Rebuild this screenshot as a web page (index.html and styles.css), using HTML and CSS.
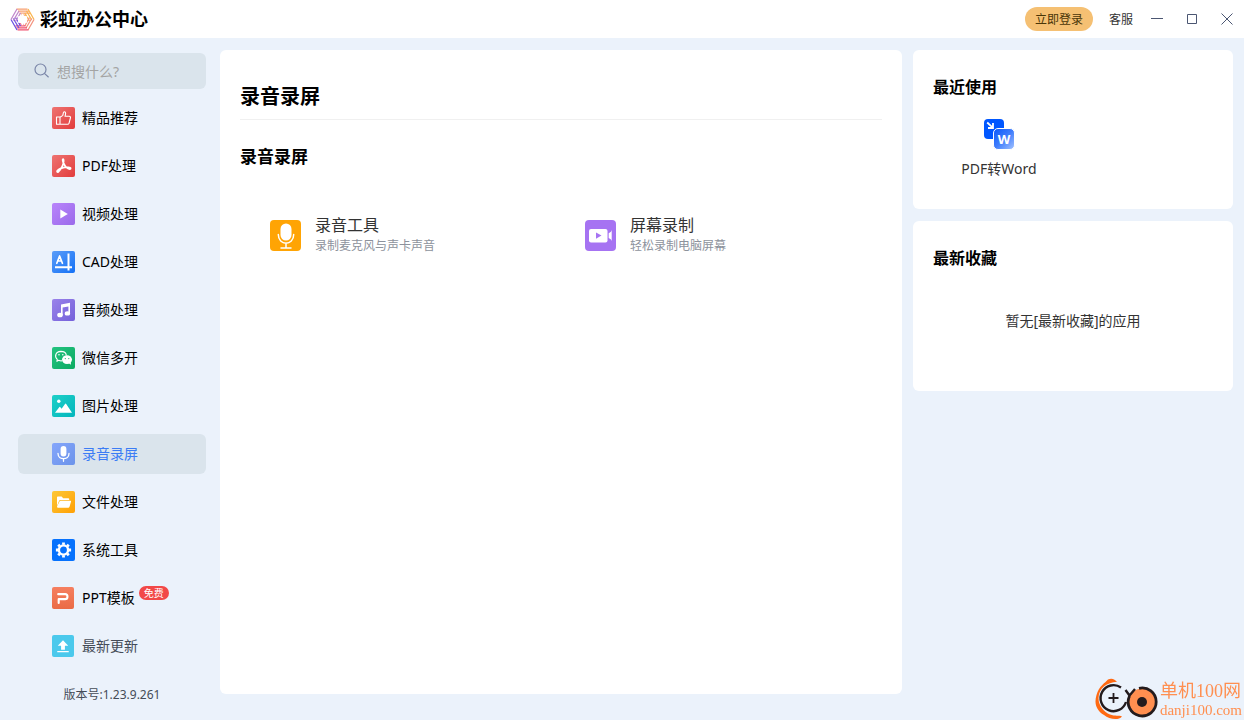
FILE: index.html
```
<!DOCTYPE html>
<html lang="zh-CN">
<head>
<meta charset="utf-8">
<meta name="viewport" content="width=device-width, initial-scale=1">
<title>彩虹办公中心</title>
<link rel="stylesheet" href="styles.css">
</head>
<body>
<header class="titlebar">
  <div class="brand">
    <svg class="brand-logo" viewBox="0 0 25 23" aria-hidden="true">
      <g fill="none" stroke-width="1.3">
        <path stroke="#f7a070" d="M6.5 1.200H17.500M8 3.200H19M9.500 5.200H20M11 7.200H16"/>
        <path stroke="#fbb650" d="M18 1L24 11.500M16.500 3L21.700 12M14.800 5L19.500 13"/>
        <path stroke="#f49480" d="M24 11.500L18 22M21.700 10.500L16 20M19.500 9.500L14.800 18"/>
        <path stroke="#f0506f" d="M7.500 21.800H18.500M6.500 19.800H17M5.500 17.800H15.500M9 15.800H14"/>
        <path stroke="#6c52e2" d="M1 11.500L7 22M3.300 10.500L9 20M5.500 9.500L10.500 18"/>
        <path stroke="#c288cc" d="M1 11.500L7 1M3.300 12.500L9 3M5.500 13.500L10.500 5"/>
      </g>
      <path fill="#fff" d="M12.500 5.500L14.400 8.300H17.800L16.100 11.500L17.800 14.700H14.400L12.500 17.500L10.600 14.700H7.200L8.900 11.500L7.200 8.300H10.600Z"/>
    </svg>
    <h1 class="brand-name">彩虹办公中心</h1>
  </div>
  <div class="actions">
    <button class="login" type="button">立即登录</button>
    <button class="service" type="button">客服</button>
    <button class="win" type="button" aria-label="最小化"><svg viewBox="0 0 12 12"><path d="M0 5.5H12"/></svg></button>
    <button class="win" type="button" aria-label="最大化"><svg viewBox="0 0 12 12"><path d="M1.5 1.5H10.5V10.5H1.5Z"/></svg></button>
    <button class="win" type="button" aria-label="关闭"><svg viewBox="0 0 12 12"><path d="M.5 .5L11.5 11.5M11.5 .5L.5 11.5"/></svg></button>
  </div>
</header>

<div class="layout">
  <aside class="sidebar">
    <label class="search">
      <svg class="search-icon" viewBox="0 0 16 16" aria-hidden="true"><circle cx="6.5" cy="6.5" r="5.5"/><path d="M10.4 10.4L14.600 14.2"/></svg>
      <input class="search-input" type="text" placeholder="想搜什么?" aria-label="搜索">
    </label>
    <nav class="nav">
      <a class="nav-item" href="#"><svg class="nav-icon bg-red" viewBox="0 0 23 22"><path class="line thumb" d="M4.5 10H8V17.3H4.5ZM8 10.2L10.6 8.6C11.3 7.5 11 5.5 11.9 4.9C13.3 4.4 14 6 13.4 7.8L13 9.3H17.2C18.3 9.3 18.7 10.2 18.4 11L17 16.3C16.8 17 16.3 17.3 15.6 17.3H8"/></svg>精品推荐</a>
      <a class="nav-item" href="#"><svg class="nav-icon bg-red" viewBox="0 0 23 22"><path class="line pdf" d="M10.9 4.2C9.8 4.8 11.6 8.6 13 10.7C14.5 13 17.8 14.9 18.6 13.7C19.2 12.4 14.5 11.8 11.3 12.6C8 13.4 4.4 15.6 5.2 16.9C6.4 18.1 9.6 13 10.7 10.3C11.6 8 12.2 4 10.9 4.2Z"/></svg>PDF处理</a>
      <a class="nav-item" href="#"><svg class="nav-icon bg-violet" viewBox="0 0 23 22"><path class="solid" d="M8.3 6.6V15.4L15.8 11Z"/></svg>视频处理</a>
      <a class="nav-item" href="#"><svg class="nav-icon bg-blue" viewBox="0 0 23 22"><path class="line cad-letter" d="M4.8 12.3L7.6 5L10.400 12.3M5.8 10H9.4"/><path class="line cad-rule" d="M16.5 2.500V19.500M3 16.3H20"/></svg>CAD处理</a>
      <a class="nav-item" href="#"><svg class="nav-icon bg-indigo" viewBox="0 0 23 22"><path class="solid" d="M9 5.4L18 3.8V14.7H16.4V7.4L10.6 8.4V16.3H9Z"/><ellipse class="solid" cx="8" cy="16" rx="2.8" ry="2.3"/><ellipse class="solid" cx="15.4" cy="14.4" rx="2.7" ry="2.2"/></svg>音频处理</a>
      <a class="nav-item" href="#"><svg class="nav-icon bg-green" viewBox="0 0 23 22"><path class="line thumb" d="M10 13.8C8.5 14 7.4 13.6 6.8 13.3L4.9 14.3L5.3 12.4C2.2 9.9 3.4 4.6 8.8 4.4C12 4.4 14 6.2 14.3 8"/><circle class="solid" cx="7" cy="7.8" r=".8"/><circle class="solid" cx="10.8" cy="7.8" r=".8"/><ellipse class="solid" cx="15" cy="12.6" rx="5" ry="4.3"/><path class="solid" d="M16.5 16L19 17.8L18.7 15Z"/><circle cx="13.3" cy="11.6" r=".6" fill="#14b36e"/><circle cx="16.8" cy="11.6" r=".6" fill="#14b36e"/></svg>微信多开</a>
      <a class="nav-item" href="#"><svg class="nav-icon bg-teal" viewBox="0 0 23 22"><circle class="solid" cx="6.8" cy="6.3" r="1.7"/><path class="solid" d="M3 17.8L7.2 12.2Q7.8 11.5 8.4 12.2L9.6 13.8L13 9Q13.6 8.2 14.2 9L20 17.8Z"/></svg>图片处理</a>
      <a class="nav-item active" href="#" aria-current="page"><svg class="nav-icon bg-peri" viewBox="0 0 23 22"><rect class="solid" x="8.6" y="3" width="5.8" height="10.5" rx="2.9"/><path class="line" d="M6 10.5C6 17.4 17 17.4 17 10.5M11.5 15.7V18.3"/></svg>录音录屏</a>
      <a class="nav-item" href="#"><svg class="nav-icon bg-amber" viewBox="0 0 23 22"><path class="solid" d="M5 15V6.2Q5 5.4 5.8 5.4H9.6L11.2 7.2H16.3Q17.2 7.2 17.2 8V9H8.3Q7.3 9 7 10Z"/><path class="solid" d="M8.600 9.7H18.4Q19.4 9.7 19 10.7L17.5 15.8Q17.2 16.8 16.2 16.8H6Q5 16.8 5 15.5L7.5 10.5Q7.8 9.7 8.6 9.7Z"/></svg>文件处理</a>
      <a class="nav-item" href="#"><svg class="nav-icon bg-royal" viewBox="0 0 23 22"><circle cx="11.5" cy="11" r="4.6" fill="none" stroke="#fff" stroke-width="2.4"/><path class="line gear" d="M11.5 5.8V3.4M11.5 16.2V18.6M6.3 11H3.9M16.7 11H19.1M7.8 7.3L6.2 5.7M15.2 14.7L16.8 16.3M7.8 14.7L6.2 16.3M15.2 7.3L16.8 5.7"/></svg>系统工具</a>
      <a class="nav-item" href="#"><svg class="nav-icon bg-coral" viewBox="0 0 23 22"><path class="line ppt" d="M6.500 7H13.700C17 7 17 12.200 13.700 12.200H7V16.300"/></svg>PPT模板<span class="badge">免费</span></a>
      <a class="nav-item muted" href="#"><svg class="nav-icon bg-sky" viewBox="0 0 23 22"><path class="solid" d="M11.5 5L17 10.7H13.5V15H9.5V10.7H6ZM5.5 16.2H17.5V17.6H5.5Z"/></svg>最新更新</a>
    </nav>
    <p class="version">版本号:1.23.9.261</p>
  </aside>

  <main class="panel content">
    <h2 class="page-title">录音录屏</h2>
    <h3 class="section-title">录音录屏</h3>
    <div class="tools">
      <a class="tool" href="#">
        <svg class="tool-icon" viewBox="0 0 31 31" aria-hidden="true"><rect width="31" height="31" rx="4" fill="#ffa404"/><rect x="10.500" y="3.5" width="11" height="17" rx="5.5" fill="#fff"/><path d="M8.3 14.5C8.3 26 23.7 26 23.7 14.5M16 23V27.5M11 28H21" fill="none" stroke="#fff" stroke-width="1.5" stroke-linecap="round"/></svg>
        <span class="tool-text"><span class="tool-name">录音工具</span><span class="tool-desc">录制麦克风与声卡声音</span></span>
      </a>
      <a class="tool" href="#">
        <svg class="tool-icon" viewBox="0 0 31 31" aria-hidden="true"><rect width="31" height="31" rx="4" fill="#a673f2"/><rect x="4" y="9" width="18.5" height="13.5" rx="2" fill="#fff"/><path d="M11 12.5V18.7L16.5 15.6Z" fill="#a673f2"/><path d="M23.7 13.2Q26.7 12 26.7 10V21Q26.7 19.5 23.7 18Z" fill="#fff"/></svg>
        <span class="tool-text"><span class="tool-name">屏幕录制</span><span class="tool-desc">轻松录制电脑屏幕</span></span>
      </a>
    </div>
  </main>

  <aside class="side">
    <section class="panel card recent">
      <h3 class="card-title">最近使用</h3>
      <a class="recent-item" href="#">
        <svg class="recent-icon" viewBox="0 0 30 30" aria-hidden="true">
          <defs><linearGradient id="word" x1="0" y1="0" x2="1" y2="1"><stop offset="0" stop-color="#0a58fb"/><stop offset=".5" stop-color="#3f7dfc"/><stop offset="1" stop-color="#a5c4ff"/></linearGradient></defs>
          <rect width="20" height="20" rx="4" fill="#0057ff"/>
          <path d="M3.2 3.5L8.5 8.3M4 9H9V4" fill="none" stroke="#fff" stroke-width="1.8"/>
          <rect x="9.5" y="9.5" width="21" height="21" rx="4.5" fill="url(#word)" stroke="#fff"/>
          <text class="word-mark" x="20" y="24.5" text-anchor="middle">W</text>
        </svg>
        PDF转Word
      </a>
    </section>
    <section class="panel card favorites">
      <h3 class="card-title">最新收藏</h3>
      <p class="empty">暂无[最新收藏]的应用</p>
    </section>
  </aside>
</div>

<div class="watermark">
  <svg class="watermark-logo" viewBox="0 0 64 42" aria-hidden="true">
    <path d="M1.500 17C4 8 10 5 13 1.500C17 -.5 20 1.500 22 3.800C12 4.500 4 10 3.500 20C3.500 28 9 34 15 36.500C20 38.500 24 37 27 38.500C23 43 14 41 9 37C1 32 -1 25 1.500 17Z" fill="#ff6a13"/>
    <circle cx="18.5" cy="20" r="13" fill="#ebf2fb"/>
    <path d="M26 9.500A13 13 0 1 0 31 24" fill="none" stroke="#231b1d" stroke-width="2.4"/>
    <path d="M18.5 15V25M13.5 20H23.5" stroke="#231b1d" stroke-width="1.8"/>
    <circle cx="47" cy="24" r="13.5" fill="#ff8f50"/>
    <path d="M44 10.300A14 14 0 1 1 34.500 18" fill="none" stroke="#231b1d" stroke-width="2.8"/>
    <circle cx="47" cy="24" r="5" fill="#231b1d"/>
    <path d="M30.500 12L34.5 17.500L40 11" fill="none" stroke="#231b1d" stroke-width="2.4"/>
  </svg>
  <div class="watermark-text"><span class="watermark-name">单机100网</span><span class="watermark-url">danji100.com</span></div>
</div>
</body>
</html>
```

FILE: styles.css
```
* { box-sizing: border-box; }
body {
  margin: 0;
  min-height: 100vh;
  display: flex;
  flex-direction: column;
  background: #ebf2fb;
  color: #000;
  font: 14px/20px "Noto Sans", "Noto Sans CJK SC", sans-serif;
}
h1, h2, h3, p { margin: 0; }
a { color: inherit; text-decoration: none; }
button { border: 0; padding: 0; background: none; font: inherit; cursor: pointer; }

.titlebar {
  display: flex;
  align-items: center;
  justify-content: space-between;
  height: 38px;
  padding: 0 11px 0 10px;
  background: #fff;
}
.brand { display: flex; align-items: center; gap: 5px; }
.brand-logo { width: 25px; height: 23px; }
.brand-name { font-size: 18px; line-height: 24px; }
.actions { display: flex; align-items: center; font-size: 12px; color: #333; }
.login {
  height: 24px;
  padding: 2px 10px 0;
  border-radius: 12px;
  background: #f5c073;
  color: #4a3608;
}
.service { margin: 0 18px 0 16px; padding-top: 2px; color: #333; }
.win { display: flex; width: 12px; height: 12px; }
.win + .win { margin-left: 23px; }
.win svg { width: 12px; height: 12px; fill: none; stroke: #4b5672; }

.layout {
  flex: 1;
  display: grid;
  grid-template-columns: 188px minmax(0, 1fr) 320px;
  padding: 12px 11px 14px 18px;
}
.panel { background: #fff; border-radius: 6px; }

.sidebar { padding-top: 3px; }
.search {
  display: flex;
  align-items: center;
  gap: 7px;
  height: 36px;
  padding: 0 16px;
  border-radius: 6px;
  background: #dae4ec;
}
.search-icon { flex: none; width: 16px; height: 16px; fill: none; stroke: #7a86a8; stroke-width: 1.2; }
.search-input {
  flex: 1;
  min-width: 0;
  border: 0;
  padding: 2px 0 0;
  outline: 0;
  background: none;
  font: inherit;
}
.search-input::placeholder { color: #a4a4a4; opacity: 1; }
.nav { display: grid; gap: 8px; margin-top: 9px; }
.nav-item {
  display: flex;
  align-items: center;
  height: 40px;
  padding-left: 34px;
  border-radius: 6px;
}
.nav-icon { width: 23px; height: 22px; margin-right: 7px; border-radius: 2px; }
.active { background: #dae4ec; color: #3b7cf5; }
.muted { color: #444b57; }
.solid { fill: #fff; }
.line { fill: none; stroke: #fff; stroke-width: 1.3; stroke-linejoin: round; stroke-linecap: round; }
.thumb { stroke-width: 1.1; }
.pdf { stroke-width: 1.7; }
.cad-letter { stroke-width: 1.7; }
.cad-rule { stroke-width: 2; stroke-linecap: butt; }
.gear { stroke-width: 2.8; stroke-linecap: butt; }
.ppt { stroke-width: 2.2; }
.bg-red { background: linear-gradient(135deg, #ee7472, #e23c3c); }
.bg-violet { background: linear-gradient(135deg, #b985fb, #9a6aea); }
.bg-blue { background: linear-gradient(135deg, #5b9df8, #1471f6); }
.bg-indigo { background: linear-gradient(135deg, #9a83ea, #7461da); }
.bg-green { background: linear-gradient(135deg, #22c380, #0caa62); }
.bg-teal { background: linear-gradient(135deg, #1ed0c8, #04b6bd); }
.bg-peri { background: linear-gradient(135deg, #85a6fb, #6b93ea); }
.bg-amber { background: linear-gradient(135deg, #fdc838, #ffa004); }
.bg-royal { background: #0672fd; }
.bg-coral { background: linear-gradient(180deg, #f57f60, #ea6b45); }
.bg-sky { background: #4bc9ec; }
.bg-coral, .bg-sky { width: 22px; margin-right: 8px; }
.badge {
  align-self: flex-start;
  margin: 8px 0 0 4px;
  padding: 0 5px;
  border-radius: 7px;
  background: #f24848;
  color: #fff;
  font-size: 10px;
  line-height: 14px;
}
.version { margin-top: 19px; text-align: center; font-size: 12px; color: #444b57; }

.content { margin: 0 11px 12px 14px; padding: 30px 20px 20px; }
.page-title {
  padding-bottom: 5px;
  border-bottom: 1px solid #f0f0f0;
  font-size: 20px;
  line-height: 34px;
}
.section-title { margin-top: 25px; font-size: 17px; line-height: 24px; }
.tools { display: grid; grid-template-columns: 1fr 1fr; margin-top: 45px; padding-right: 12px; }
.tool { display: flex; align-items: center; gap: 14px; padding-left: 30px; }
.tool-icon { width: 31px; height: 31px; }
.tool-text { display: grid; }
.tool-name { font-size: 16px; line-height: 22px; color: #333; }
.tool-desc { font-size: 12px; line-height: 20px; color: #8d929c; }

.side { display: flex; flex-direction: column; gap: 12px; }
.card { padding: 25px 20px 30px; }
.card-title { font-size: 16px; line-height: 24px; }
.recent-item {
  display: flex;
  flex-direction: column;
  align-items: center;
  gap: 10px;
  width: 132px;
  margin-top: 20px;
  color: #333;
}
.recent-icon { width: 30px; height: 30px; overflow: visible; }
.word-mark { fill: #fff; font: bold 13px "Noto Sans", sans-serif; }
.card.favorites { padding-bottom: 60px; }
.empty { margin-top: 41px; text-align: center; color: #333; }

.watermark {
  position: fixed;
  right: 2px;
  bottom: 0;
  display: flex;
  align-items: center;
  gap: 1px;
}
.watermark-logo { width: 64px; height: 42px; }
.watermark-text { display: grid; padding-top: 2px; color: #ff8f50; }
.watermark-name { font: 18px/20px "Liberation Serif", "Noto Sans CJK SC", serif; }
.watermark-url { font: 15px/18px "Liberation Serif", serif; }
```
